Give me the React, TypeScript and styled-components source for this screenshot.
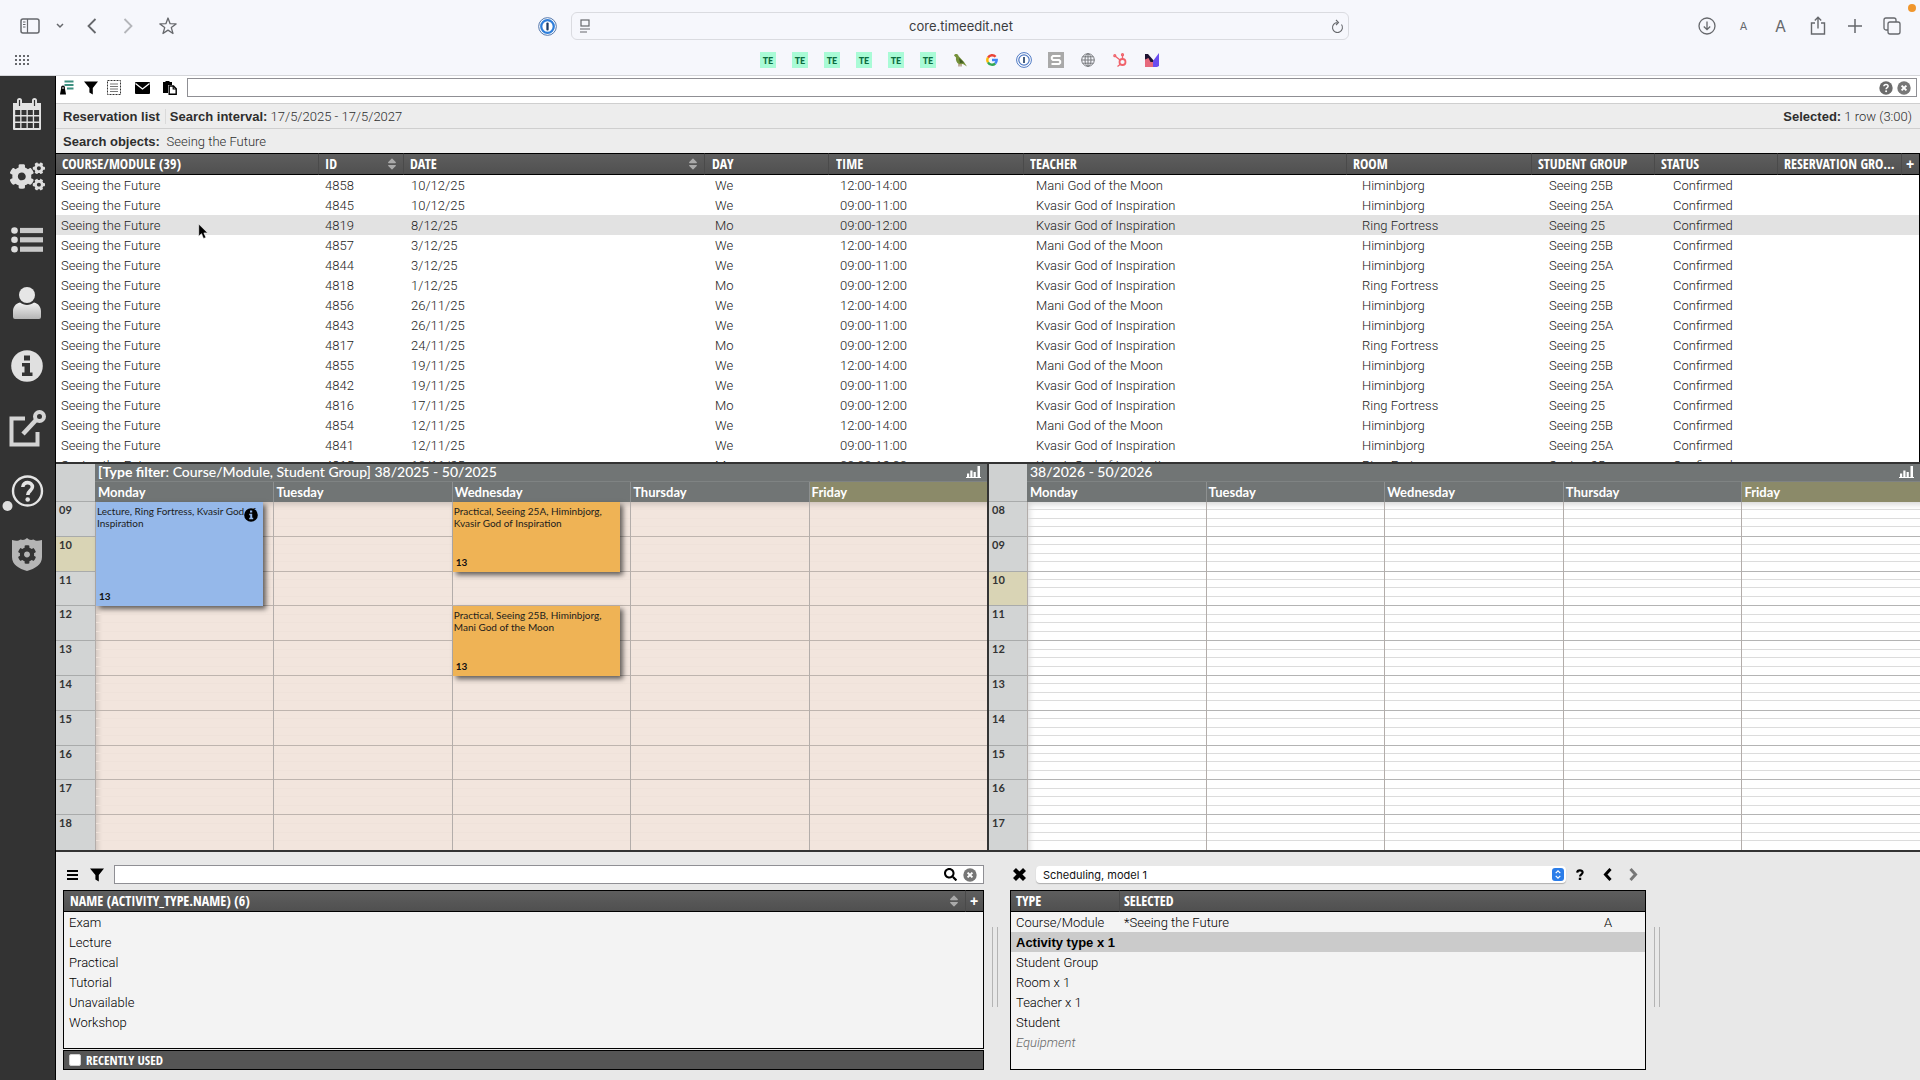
import React from "react";
import styled, { createGlobalStyle, css } from "styled-components";
import { FaCogs, FaSearch, FaSort, FaCog } from "react-icons/fa";

const HELV = `"Helvetica Neue", "Liberation Sans", Arial, sans-serif`;
const LIGHT = `Roboto, "Liberation Sans", sans-serif`;
const CONDENSED = `"Open Sans Condensed", "Liberation Sans Narrow", Roboto, sans-serif`;
const LATO = `Lato, "Open Sans", sans-serif`;

const Global = createGlobalStyle`
  *, *::before, *::after { box-sizing: border-box; }
  body { margin: 0; background: #e8e8e8; font-family: ${HELV}; font-size: 13px; color: #222; }
  button { border: 0; padding: 0; margin: 0; background: none; color: inherit; font: inherit; }
  svg { display: block; }
`;

/* ---------- page frame ---------- */

const Page = styled.div`
  display: flex;
  flex-direction: column;
  height: 100vh;
`;

const Frame = styled.div`
  display: flex;
  flex: 1;
  min-height: 0;
`;

const Main = styled.main`
  display: flex;
  flex-direction: column;
  flex: 1;
  min-width: 0;
  border-left: 1px solid #000;
`;

/* ---------- browser chrome ---------- */

const Chrome = styled.header`
  position: relative;
  background: #f6f7fc;
  border-bottom: 1px solid #d5d6da;
  color: #66686c;
`;

const ChromeRow = styled.div`
  display: grid;
  grid-template-columns: 1fr minmax(200px, 778px) 1fr;
  align-items: center;
  height: 52px;
`;

const ChromeGroup = styled.div<{ $end?: boolean }>`
  display: flex;
  align-items: center;
  justify-content: ${(p) => (p.$end ? "flex-end" : "flex-start")};
  padding: 0 10px 0 12px;
`;

const ChromeButton = styled.button<{ $w: number; $faint?: boolean; $push?: boolean; $size?: number }>`
  display: flex;
  align-items: center;
  justify-content: center;
  width: ${(p) => p.$w}px;
  height: 28px;
  margin-left: ${(p) => (p.$push ? "auto" : "0")};
  font-family: Inter, sans-serif;
  font-size: ${(p) => p.$size ?? 13}px;
  opacity: ${(p) => (p.$faint ? 0.45 : 1)};
`;

const Address = styled.div`
  display: flex;
  align-items: center;
  height: 28px;
  padding: 0 4px 0 6px;
  border: 1px solid #dadbe0;
  border-radius: 6px;
`;

const AddressInput = styled.input`
  flex: 1;
  min-width: 0;
  border: 0;
  background: none;
  text-align: center;
  font-family: Inter, sans-serif;
  font-size: 13px;
  color: #3c3d40;
`;

const RecordingDot = styled.span`
  position: absolute;
  top: 4px;
  right: 4px;
  width: 8px;
  height: 8px;
  border-radius: 50%;
  background: #f0962c;
`;

const Bookmarks = styled.nav`
  display: grid;
  grid-template-columns: 1fr auto 1fr;
  align-items: center;
  padding: 0 14px 7px;
`;

const GridButton = styled.button`
  justify-self: start;
  padding: 3px 1px;
`;

const BookmarkList = styled.div`
  display: flex;
  gap: 16px;
`;

const Bookmark = styled.a<{ $te?: boolean }>`
  display: flex;
  align-items: center;
  justify-content: center;
  width: 16px;
  height: 16px;
  text-decoration: none;
  ${(p) =>
    p.$te &&
    css`
      background: #a9fbd6;
      color: #0b6b3f;
      font: 900 9px Lato, sans-serif;
    `}
`;

/* ---------- left rail ---------- */

const Rail = styled.nav`
  display: flex;
  flex-direction: column;
  width: 55px;
  padding: 6px 1px 0 0;
  background: #333;
  color: #dedede;
`;

const RailButton = styled.button`
  display: flex;
  align-items: center;
  justify-content: center;
  height: 63px;
`;

/* ---------- reservation list ---------- */

const ToolRow = styled.div`
  display: flex;
  align-items: center;
  height: 27px;
  padding: 0 3px 4px 2px;
  background: #fff;
  color: #000;
`;

const ToolButton = styled.button<{ $w: number; $color?: string }>`
  display: flex;
  align-items: center;
  justify-content: center;
  flex: none;
  width: ${(p) => p.$w}px;
  height: 19px;
  color: ${(p) => p.$color ?? "#000"};
`;

const SearchBox = styled.div<{ $gap?: number }>`
  display: flex;
  align-items: center;
  flex: 1;
  min-width: 0;
  height: 19px;
  margin-left: ${(p) => p.$gap ?? 0}px;
  padding-right: 3px;
  background: #fff;
  border: 1px solid #8f8f94;
`;

const SearchInput = styled.input`
  flex: 1;
  min-width: 0;
  height: 100%;
  border: 0;
  padding: 0 4px;
  background: none;
  font: 13px ${HELV};
  outline: none;
`;

const InfoRow = styled.div`
  display: flex;
  align-items: center;
  height: 25px;
  padding: 0 8px 0 7px;
  background: #ededed;
  border-top: 1px solid #cfcfcf;
  color: #2e2e2e;
  white-space: pre;
`;

const InfoItem = styled.span<{ $bar?: boolean; $end?: boolean }>`
  font: 300 13px ${LIGHT};
  margin-left: ${(p) => (p.$end ? "auto" : "0")};
  ${(p) =>
    p.$bar &&
    css`
      margin-left: 5px;
      padding-left: 4px;
      border-left: 1px solid #dadada;
    `}
  strong {
    font: 700 13px ${HELV};
  }
`;

const ListPane = styled.section`
  flex: none;
  height: 309px;
  overflow: hidden;
  background: #fff;
  border-right: 1px solid #000;
`;

const Grid = styled.table`
  width: 100%;
  table-layout: fixed;
  border-collapse: separate;
  border-spacing: 0;
`;

const HeadCell = styled.th<{ $first?: boolean; $pad?: number }>`
  height: 22px;
  padding: 0 0 0 ${(p) => p.$pad ?? 6}px;
  background: linear-gradient(#5e5e5e, #505050);
  border-top: 1px solid #000;
  border-bottom: 1px solid #000;
  border-left: ${(p) => (p.$first ? "0" : "1px solid #4a4a4a")};
  color: #fff;
  font: 700 14px/20px ${CONDENSED};
  text-align: left;
  white-space: nowrap;
  overflow: hidden;
`;

const HeadLabel = styled.div`
  margin-right: 4px;
  overflow: hidden;
  text-overflow: ellipsis;
`;

const HeadFlex = styled.div`
  display: flex;
  align-items: center;
  justify-content: space-between;
  padding-right: 4px;
`;

const SortButton = styled.button`
  color: #aaa;
`;

const AddButton = styled.button`
  display: block;
  font-family: "Liberation Sans", sans-serif;
  font-size: 14px;
`;

const Row = styled.tr<{ $selected?: boolean }>`
  background: ${(p) => (p.$selected ? "#e2e2e2" : "transparent")};
`;

const Cell = styled.td<{ $pad: number }>`
  position: relative;
  height: 20px;
  padding: 2px 0 0 ${(p) => p.$pad}px;
  font: 300 13px/18px ${LIGHT};
  color: #222;
  white-space: nowrap;
`;

const Pointer = styled.svg`
  position: absolute;
  left: 142px;
  top: 8px;
`;

/* ---------- calendars ---------- */

const Calendars = styled.section`
  display: grid;
  grid-template-columns: 931fr 933fr;
  flex: 1;
  min-height: 0;
  border-top: 2px solid #333;
  border-bottom: 2px solid #333;
`;

const Calendar = styled.div<{ $divided?: boolean }>`
  display: grid;
  grid-template-columns: ${(p) => (p.$divided ? 38 : 39)}px minmax(0, 1fr);
  grid-template-rows: 38px minmax(0, 1fr);
  min-width: 0;
  border-left: ${(p) => (p.$divided ? "2px solid #333" : "0")};
  font-family: ${LATO};
`;

const Corner = styled.div`
  background: #cfd1d1;
  border-bottom: 1px solid #a9abab;
`;

const CalHead = styled.div`
  background: #717575;
  color: #fff;
`;

const CalTitle = styled.div`
  display: flex;
  align-items: center;
  justify-content: space-between;
  height: 18px;
  padding: 0 6px 2px 3px;
  border-bottom: 1px solid #7f8383;
  font-size: 14px;
  font-weight: 500;
  line-height: 15px;
  white-space: nowrap;
  b {
    font-weight: 700;
  }
`;

const Days = styled.div`
  display: grid;
  grid-template-columns: repeat(5, minmax(0, 1fr));
  height: 20px;
`;

const DayName = styled.div<{ $today?: boolean; $first?: boolean }>`
  padding-left: 2px;
  border-left: 1px solid ${(p) => (p.$first ? "transparent" : "#8d9090")};
  background: ${(p) => (p.$today ? "#8b8a69" : "transparent")};
  font-size: 13px;
  font-weight: 700;
  line-height: 20px;
`;

const Hours = styled.div`
  display: grid;
  grid-template-rows: repeat(10, minmax(0, 1fr));
  background: #d2d4d4;
`;

const Hour = styled.div<{ $now?: boolean }>`
  padding: 1px 0 0 3px;
  border-bottom: 1px solid #a9abab;
  background: ${(p) => (p.$now ? "#d9d4b5" : "transparent")};
  color: #333;
  font-size: 11px;
  font-weight: 700;
  line-height: 14px;
  &:last-child {
    border-bottom: 0;
  }
`;

const Board = styled.div<{ $tint?: boolean }>`
  display: grid;
  grid-template-columns: repeat(5, minmax(0, 1fr));
  background: ${(p) => (p.$tint ? "#f2e5dd" : "#fff")};
  box-shadow: inset 6px 6px 6px -4px rgba(0, 0, 0, 0.18);
`;

const DayColumn = styled.div`
  display: grid;
  grid-template-rows: repeat(10, minmax(0, 1fr));
  grid-template-columns: minmax(0, 1fr);
  border-left: 1px solid #b3adaa;
`;

const Slot = styled.div<{ $row: number; $tint?: boolean }>`
  grid-row: ${(p) => p.$row};
  grid-column: 1;
  display: grid;
  grid-template-rows: repeat(4, 1fr);
  border-bottom: 1px solid ${(p) => (p.$tint ? "#beb4ae" : "#b4b4b4")};
  ${(p) => p.$row === 10 && "border-bottom: 0;"}
`;

const Quarter = styled.div<{ $tint?: boolean }>`
  border-bottom: 1px solid ${(p) => (p.$tint ? "#efe2da" : "#dcdcdc")};
  &:last-child {
    border-bottom: 0;
  }
`;

const Event = styled.article<{ $from: number; $to: number; $color: string }>`
  grid-row: ${(p) => p.$from} / ${(p) => p.$to};
  grid-column: 1;
  position: relative;
  display: flex;
  flex-direction: column;
  justify-content: space-between;
  width: 94%;
  padding: 3px 0 3px 1px;
  background: ${(p) => p.$color};
  box-shadow: 3px 3px 5px rgba(0, 0, 0, 0.6);
  color: #1c1c1c;
  font-size: 10px;
  line-height: 12px;
`;

const EventCount = styled.strong`
  padding-left: 2px;
  font-size: 10px;
  line-height: 14px;
  color: #111;
`;

const EventInfo = styled.svg`
  position: absolute;
  right: 5px;
  top: 6px;
`;

/* ---------- bottom panels ---------- */

const Bottom = styled.section`
  display: grid;
  grid-template-columns: minmax(0, 921fr) 26px minmax(0, 636fr) 26px minmax(0, 248fr);
  flex: none;
  height: 228px;
  padding: 13px 0 10px 7px;
  background: #e8e8e8;
`;

const Panel = styled.div`
  display: flex;
  flex-direction: column;
  gap: 6px;
  min-width: 0;
`;

const PanelTools = styled.div`
  display: flex;
  align-items: center;
  height: 19px;
`;

const PanelStack = styled.div`
  display: flex;
  flex-direction: column;
  gap: 1px;
  flex: 1;
  min-height: 0;
`;

const PanelBox = styled.div`
  flex: 1;
  min-height: 0;
  overflow: hidden;
  background: #f3f3f3;
  border: 1px solid #000;
  border-top: 0;
`;

const PanelCell = styled.td<{ $bold?: boolean; $muted?: boolean }>`
  height: 20px;
  padding: 2px 0 0 5px;
  font: ${(p) => (p.$bold ? `700 13px/18px ${HELV}` : `300 13px/18px ${LIGHT}`)};
  font-style: ${(p) => (p.$muted ? "italic" : "normal")};
  color: ${(p) => (p.$muted ? "#666" : "#000")};
  white-space: nowrap;
`;

const PanelRow = styled.tr<{ $selected?: boolean }>`
  background: ${(p) => (p.$selected ? "#cbcbcb" : "transparent")};
`;

const RecentBar = styled.label`
  display: flex;
  align-items: center;
  gap: 5px;
  height: 20px;
  padding-left: 5px;
  background: #555;
  border: 1px solid #000;
  color: #fff;
  font: 700 13px ${CONDENSED};
`;

const RecentCheck = styled.input`
  appearance: none;
  width: 12px;
  height: 12px;
  margin: 0;
  border-radius: 2px;
  background: #fff;
  border: 1px solid #d0d0d0;
`;

const Splitter = styled.div`
  align-self: start;
  justify-self: start;
  width: 6px;
  height: 80px;
  margin: 62px 0 0 8px;
  border: solid #b4b4b4;
  border-width: 0 1px;
`;

const ModelPick = styled.div`
  display: grid;
  grid-template-columns: minmax(0, 1fr);
  align-items: center;
  flex: 1;
  margin-left: 8px;
  border-radius: 4px;
  background: #fff;
  box-shadow: 0 1px 1px rgba(0, 0, 0, 0.25);
  > * {
    grid-area: 1 / 1;
  }
  > svg {
    justify-self: end;
    margin-right: 2px;
    pointer-events: none;
  }
`;

const ModelSelect = styled.select`
  appearance: none;
  height: 17px;
  padding: 0 20px 0 7px;
  border: 0;
  background: none;
  color: #111;
  font: 11px Inter, sans-serif;
`;

/* ---------- drawings ---------- */

const OnePassword = ({ s }: { s: number }) => (
  <svg width={s} height={s} viewBox="0 0 20 20">
    <circle cx="10" cy="10" r="9.3" fill="#fff" stroke="#4a70a8" strokeWidth="1" />
    <circle cx="10" cy="10" r="6.6" fill="#fff" stroke="#2f7fdb" strokeWidth="2.4" />
    <rect x="8.8" y="5.8" width="2.4" height="8.4" rx="1" fill="#1c3a63" />
  </svg>
);

const OnePasswordOutline = () => (
  <svg width="16" height="16" viewBox="0 0 16 16" fill="#fff" stroke="#4d78c4">
    <circle cx="8" cy="8" r="7.4" strokeWidth="1" />
    <circle cx="8" cy="8" r="5.2" strokeWidth="1.2" />
    <rect x="7.2" y="5" width="1.6" height="6" fill="#1c3a63" stroke="none" />
  </svg>
);

const CloseCircle = () => (
  <svg width="14" height="14" viewBox="0 0 14 14">
    <circle cx="7" cy="7" r="6.7" fill="#777" />
    <path d="M4.6 4.6l4.8 4.8M9.4 4.6l-4.8 4.8" stroke="#fff" strokeWidth="2" />
  </svg>
);

const HelpCircle = () => (
  <svg width="14" height="14" viewBox="0 0 14 14">
    <circle cx="7" cy="7" r="6.7" fill="#6b6b6b" />
    <path d="M4.9 5.3c.1-2.6 4.3-2.5 4.2 0C9.1 6.7 7.1 6.6 7.1 8.3" fill="none" stroke="#fff" strokeWidth="1.5" />
    <circle cx="7.1" cy="10.3" r="1" fill="#fff" />
  </svg>
);

const ChartBars = () => (
  <svg width="15" height="12" viewBox="0 0 15 12" fill="#fff">
    <path d="M1 7.5h2.200V11H1zM4.300 4.500h2.200V11H4.300zM7.600 6h2.200v5H7.600zM11.500 0h2.500v11h-2.500zM0 11h15v1H0z" />
  </svg>
);

const Funnel = () => (
  <svg width="14" height="14" viewBox="0 0 14 14">
    <path d="M0 .5h14L8.800 7v6.500L5.400 11.500V7z" />
  </svg>
);

const railIcons: { label: string; icon: React.ReactNode }[] = [
  {
    label: "Calendar",
    icon: (
      <svg width="30" height="32" viewBox="0 0 30 32">
        <path fill="#e2e2e2" d="M1 5h4V2.500a2.500 2.500 0 0 1 5 0V5h10V2.500a2.500 2.500 0 0 1 5 0V5h4v26a1 1 0 0 1-1 1H2a1 1 0 0 1-1-1z" />
        <path stroke="#333" strokeWidth="1.200" d="M7.500 2v6M22.500 2v6" />
        <g fill="#333">
          {[12, 18.5, 25].map((y) =>
            [3.2, 9.5, 15.8, 22.1].map((x) => <rect key={`${x}-${y}`} x={x} y={y} width="5" height="5" />)
          )}
        </g>
      </svg>
    ),
  },
  { label: "Settings", icon: <FaCogs size={35} /> },
  {
    label: "Lists",
    icon: (
      <svg width="32" height="26" viewBox="0 0 32 26" fill="#dedede">
        {[3.5, 12.8, 22.2].map((y) => (
          <g key={y}>
            <circle cx="3.5" cy={y} r="3.3" />
            <rect x="9" y={y - 2.6} width="23" height="5.2" fill="#c9c9c9" />
          </g>
        ))}
      </svg>
    ),
  },
  {
    label: "User",
    icon: (
      <svg width="30" height="32" viewBox="0 0 30 32">
        <defs>
          <linearGradient id="body" x1="0" y1="0" x2="0" y2="1">
            <stop offset="0" stopColor="#f2f2f2" />
            <stop offset="1" stopColor="#b4b4b4" />
          </linearGradient>
        </defs>
        <circle cx="15" cy="8" r="8" fill="#e6e6e6" />
        <path fill="url(#body)" d="M8 15.500c4 3.300 10 3.300 14 0 4.500 1 7 4.500 7 9V30a2 2 0 0 1-2 2H3a2 2 0 0 1-2-2v-5.500c0-4.500 2.500-8 7-9z" />
      </svg>
    ),
  },
  {
    label: "Information",
    icon: (
      <svg width="32" height="32" viewBox="0 0 32 32">
        <circle cx="16" cy="16" r="15.800" fill="#e0e0e0" />
        <path fill="#333" d="M13 5.500h6v5h-6zM11 13h8v9.500h2.500V26H11v-3.500h2.500v-6H11z" />
      </svg>
    ),
  },
  {
    label: "Open external",
    icon: (
      <svg width="38" height="38" viewBox="0 0 38 38" fill="none" stroke="#d4d4d4">
        <path strokeWidth="4" d="M17 8.500H3.500v26h26V22" />
        <path strokeWidth="4.500" d="M15 24L29 9" />
        <circle cx="31.500" cy="6.500" r="4.500" strokeWidth="4" />
      </svg>
    ),
  },
  {
    label: "Help",
    icon: (
      <svg width="50" height="38" viewBox="0 0 50 38">
        <circle cx="25.500" cy="18" r="14.500" fill="none" stroke="#e4e4e4" strokeWidth="2.400" />
        <path d="M20.800 14c.2-6 9.800-5.600 9.600 0-.1 3.500-4.600 3.800-4.600 8" fill="none" stroke="#e4e4e4" strokeWidth="3.600" />
        <circle cx="25.700" cy="26.500" r="2.300" fill="#e4e4e4" />
        <circle cx="5.500" cy="33" r="5" fill="#dedede" />
      </svg>
    ),
  },
  {
    label: "Administration",
    icon: (
      <svg width="30" height="33" viewBox="0 0 30 33">
        <path fill="#b5b5b5" d="M15 0c2 2 4 2.500 6.500 1.500C23.500 3 26 3.300 30 2v17c0 8-7 11.500-15 14C7 30.500 0 27 0 19V2c4 1.300 6.500 1 8.500-.5C11 2.500 13 2 15 0z" />
        <g color="#333">
          <FaCog x="5.5" y="7" size={19} />
        </g>
      </svg>
    ),
  },
];

/* ---------- data ---------- */

const columns = [
  { title: "COURSE/MODULE (39)", width: 262, pad: 5, headPad: 6 },
  { title: "ID", width: 85, pad: 7, sort: true },
  { title: "DATE", width: 301, pad: 8, sort: true },
  { title: "DAY", width: 124, pad: 11, headPad: 7 },
  { title: "TIME", width: 195, pad: 12, headPad: 7 },
  { title: "TEACHER", width: 0, pad: 13 },
  { title: "ROOM", width: 185, pad: 16 },
  { title: "STUDENT GROUP", width: 123, pad: 18 },
  { title: "STATUS", width: 123, pad: 19 },
  { title: "RESERVATION GROUP", width: 124, pad: 19 },
];

const kvasir = "Kvasir God of Inspiration";
const mani = "Mani God of the Moon";
const noon = (id: string, date: string) => [id, date, "We", "12:00-14:00", mani, "Himinbjorg", "Seeing 25B"];
const morning = (id: string, date: string) => [id, date, "We", "09:00-11:00", kvasir, "Himinbjorg", "Seeing 25A"];
const lecture = (id: string, date: string) => [id, date, "Mo", "09:00-12:00", kvasir, "Ring Fortress", "Seeing 25"];

const reservations = [
  noon("4858", "10/12/25"),
  morning("4845", "10/12/25"),
  lecture("4819", "8/12/25"),
  noon("4857", "3/12/25"),
  morning("4844", "3/12/25"),
  lecture("4818", "1/12/25"),
  noon("4856", "26/11/25"),
  morning("4843", "26/11/25"),
  lecture("4817", "24/11/25"),
  noon("4855", "19/11/25"),
  morning("4842", "19/11/25"),
  lecture("4816", "17/11/25"),
  noon("4854", "12/11/25"),
  morning("4841", "12/11/25"),
  lecture("4815", "10/11/25"),
];

const days = ["Monday", "Tuesday", "Wednesday", "Thursday", "Friday"];

type CalEvent = { day: number; from: number; to: number; color: string; text: string; info?: boolean };

const events: CalEvent[] = [
  { day: 0, from: 1, to: 4, color: "#95b8ea", text: "Lecture, Ring Fortress, Kvasir God of Inspiration", info: true },
  { day: 2, from: 1, to: 3, color: "#efb355", text: "Practical, Seeing 25A, Himinbjorg, Kvasir God of Inspiration" },
  { day: 2, from: 4, to: 6, color: "#efb355", text: "Practical, Seeing 25B, Himinbjorg, Mani God of the Moon" },
];

const activityTypes = ["Exam", "Lecture", "Practical", "Tutorial", "Unavailable", "Workshop"];

const selection = [
  { type: "Course/Module", value: "*Seeing the Future", mark: "A" },
  { type: "Activity type x 1", bold: true },
  { type: "Student Group" },
  { type: "Room x 1" },
  { type: "Teacher x 1" },
  { type: "Student" },
  { type: "Equipment", muted: true },
];

/* ---------- sections ---------- */

function Browser() {
  const line = { fill: "none", stroke: "currentColor", strokeWidth: 1.5 } as const;
  return (
    <Chrome>
      <RecordingDot />
      <ChromeRow>
        <ChromeGroup>
          <ChromeButton $w={36} aria-label="Sidebar">
            <svg width="20" height="16" viewBox="0 0 20 16" {...line}>
              <rect x="1" y="1" width="18" height="14" rx="2" />
              <path d="M7.500 1v14M3 4h2.500M3 6.500h2.500M3 9h2.500" strokeWidth="1.200" />
            </svg>
          </ChromeButton>
          <ChromeButton $w={24} aria-label="Tab groups">
            <svg width="8" height="6" viewBox="0 0 8 6" {...line}><path d="M1 1l3 3 3-3" /></svg>
          </ChromeButton>
          <ChromeButton $w={40} aria-label="Back">
            <svg width="10" height="16" viewBox="0 0 10 16" {...line} strokeWidth={1.8}><path d="M8.500 1L1.500 8l7 7" /></svg>
          </ChromeButton>
          <ChromeButton $w={32} $faint aria-label="Forward">
            <svg width="10" height="16" viewBox="0 0 10 16" {...line} strokeWidth={1.8}><path d="M1.500 1l7 7-7 7" /></svg>
          </ChromeButton>
          <ChromeButton $w={48} aria-label="Favourite">
            <svg width="18" height="18" viewBox="0 0 18 18" {...line} strokeWidth={1.3}>
              <path d="M9 1l2.100 5.700 6 .2-4.800 3.700 1.700 5.900L9 13.100l-5 3.400 1.700-5.900L.9 6.900l6-.2z" strokeLinejoin="round" />
            </svg>
          </ChromeButton>
          <ChromeButton $w={28} $push aria-label="1Password"><OnePassword s={19} /></ChromeButton>
        </ChromeGroup>
        <Address>
          <ChromeButton $w={14} aria-label="Reader">
            <svg width="12" height="14" viewBox="0 0 12 14" {...line} strokeWidth={1.2}>
              <rect x="2" y="1" width="8" height="6" /><path d="M1 10h10M1 13h7" />
            </svg>
          </ChromeButton>
          <AddressInput aria-label="Address" defaultValue="core.timeedit.net" />
          <ChromeButton $w={14} aria-label="Reload">
            <svg width="13" height="15" viewBox="0 0 13 15" {...line} strokeWidth={1.1}>
              <path d="M10.500 5.500a5 5 0 1 1-4-2M5 1l2.500 2.500L5 6" />
            </svg>
          </ChromeButton>
        </Address>
        <ChromeGroup $end>
          <ChromeButton $w={37} aria-label="Downloads">
            <svg width="18" height="18" viewBox="0 0 18 18" {...line} strokeWidth={1.3}>
              <circle cx="9" cy="9" r="8" /><path d="M9 4.500v8M5.800 9.500L9 12.700l3.200-3.200" />
            </svg>
          </ChromeButton>
          <ChromeButton $w={37} $size={11}>A</ChromeButton>
          <ChromeButton $w={37} $size={16}>A</ChromeButton>
          <ChromeButton $w={37} aria-label="Share">
            <svg width="16" height="20" viewBox="0 0 16 20" {...line} strokeWidth={1.4}>
              <path d="M5 7H1.500v11h13V7H11M8 12.500V1.500M4.800 4.500L8 1.300l3.200 3.200" />
            </svg>
          </ChromeButton>
          <ChromeButton $w={37} aria-label="New tab">
            <svg width="14" height="14" viewBox="0 0 14 14" {...line}><path d="M7 0v14M0 7h14" /></svg>
          </ChromeButton>
          <ChromeButton $w={37} aria-label="Tabs">
            <svg width="18" height="18" viewBox="0 0 18 18" {...line} strokeWidth={1.3}>
              <rect x="5" y="5" width="12" height="12" rx="2" /><path d="M5 13H3a2 2 0 0 1-2-2V3a2 2 0 0 1 2-2h8a2 2 0 0 1 2 2v2" />
            </svg>
          </ChromeButton>
        </ChromeGroup>
      </ChromeRow>
      <Bookmarks>
        <GridButton aria-label="All bookmarks">
          <svg width="14" height="10" viewBox="0 0 14 10" fill="#66686c">
            {[0, 4, 8].map((y) => [0, 4, 8, 12].map((x) => <rect key={`${x}-${y}`} x={x} y={y} width="2" height="2" />))}
          </svg>
        </GridButton>
        <BookmarkList>
          {[1, 2, 3, 4, 5, 6].map((n) => <Bookmark key={n} href="#" $te>TE</Bookmark>)}
          <Bookmark href="#" aria-label="Parrot">
            <svg width="14" height="14" viewBox="0 0 14 14">
              <path d="M1 2.500C2 .5 5 .5 5.500 3L11 9l3 4.500-4-2.500-4 .2C3.500 10 2.500 7 3 4.500z" fill="#75913a" />
              <path d="M6 5l5 4.500-4 .5z" fill="#3f5a22" /><path d="M6 11v2.500M8 11v2.500" stroke="#8a6b42" />
            </svg>
          </Bookmark>
          <Bookmark href="#" aria-label="Google">
            <svg width="12" height="12" viewBox="0 0 12 12" fill="none" strokeWidth="2.400">
              <path d="M9.600 2.800A4.700 4.700 0 0 0 2 3.600" stroke="#ea4335" />
              <path d="M2 3.600a4.700 4.700 0 0 0 0 4.800" stroke="#fbbc05" />
              <path d="M2 8.400a4.700 4.700 0 0 0 7.200 1.100" stroke="#34a853" />
              <path d="M9.200 9.500A4.700 4.700 0 0 0 10.700 6H6" stroke="#4285f4" />
            </svg>
          </Bookmark>
          <Bookmark href="#" aria-label="1Password"><OnePasswordOutline /></Bookmark>
          <Bookmark href="#" aria-label="S">
            <svg width="16" height="16" viewBox="0 0 16 16">
              <rect width="16" height="16" fill="#a9a9a9" />
              <path d="M12.500 4H5L3.800 5.200v1.600L5 8h6l1.200 1.200v1.600L11 12H3.500" fill="none" stroke="#fff" strokeWidth="2" />
            </svg>
          </Bookmark>
          <Bookmark href="#" aria-label="Web">
            <svg width="14" height="14" viewBox="0 0 14 14" fill="none" stroke="#77797d" strokeWidth="1">
              <circle cx="7" cy="7" r="6.300" /><ellipse cx="7" cy="7" rx="3" ry="6.300" /><path d="M7 .7v12.600M.7 7h12.600M1.600 3.800h10.800M1.600 10.200h10.800" />
            </svg>
          </Bookmark>
          <Bookmark href="#" aria-label="HubSpot">
            <svg width="14" height="15" viewBox="0 0 14 15" fill="none" stroke="#f0626a" strokeWidth="1.800">
              <circle cx="9.500" cy="9" r="3" /><path d="M9.500 6V2M7.300 7.200L2 3M7.300 11.200L4.500 13.500" strokeWidth="1.300" />
              <circle cx="9.500" cy="1.700" r=".7" /><circle cx="1.800" cy="2.700" r=".7" />
            </svg>
          </Bookmark>
          <Bookmark href="#" aria-label="N">
            <svg width="14" height="14" viewBox="0 0 14 14">
              <path d="M0 6l8 2v6H0z" fill="#e6697c" /><path d="M0 1h3l6 7v1H0z" fill="#1d1433" /><path d="M0 6.500l3.500-1.500L8 14H0z" fill="#e6697c" />
              <path d="M14 0v13l-2 1H8V8z" fill="#6a4df0" />
            </svg>
          </Bookmark>
        </BookmarkList>
      </Bookmarks>
    </Chrome>
  );
}

function ReservationTools() {
  return (
    <ToolRow>
      <ToolButton $w={17} aria-label="Locked list">
        <svg width="14" height="15" viewBox="0 0 14 15">
          <path d="M4.500 1.500h9M4.500 5h9M7 8.500h6.500" stroke="#3d9080" strokeWidth="2" />
          <path d="M0 14.500l1-5.500h4l1 5.500z" /><path d="M1.800 9.500V7.300a1.200 1.200 0 0 1 2.400 0v2.200" fill="none" stroke="#000" strokeWidth="1.400" />
        </svg>
      </ToolButton>
      <ToolButton $w={32} aria-label="Filter"><Funnel /></ToolButton>
      <ToolButton $w={14} aria-label="Select all">
        <svg width="14" height="15" viewBox="0 0 14 15" fill="none" stroke="#333">
          <rect x=".5" y=".5" width="13" height="14" strokeDasharray="2 1" />
          <path d="M3 4h8M3 6.500h8M3 9h8M3 11.500h8" stroke="#777" />
        </svg>
      </ToolButton>
      <ToolButton $w={42} aria-label="Mail">
        <svg width="15" height="12" viewBox="0 0 15 12">
          <rect width="15" height="12" rx="1" /><path d="M.5 1.500l7 5.500 7-5.500" fill="none" stroke="#fff" strokeWidth="1.300" />
        </svg>
      </ToolButton>
      <ToolButton $w={14} aria-label="Paste">
        <svg width="14" height="14" viewBox="0 0 14 14">
          <path d="M0 1h2.500V0h4v1H9v3H5v8H0z" />
          <path d="M6.200 5h4.300l2.700 2.800v5.500h-7z" fill="#fff" stroke="#000" strokeWidth="1.400" />
          <path d="M10.200 5v3h3" fill="none" stroke="#000" strokeWidth="1.200" />
        </svg>
      </ToolButton>
      <SearchBox $gap={10}>
        <SearchInput aria-label="Search reservations" />
        <ToolButton $w={18} aria-label="Help"><HelpCircle /></ToolButton>
        <ToolButton $w={18} aria-label="Clear"><CloseCircle /></ToolButton>
      </SearchBox>
    </ToolRow>
  );
}

function ReservationList() {
  return (
    <ListPane>
      <Grid>
        <colgroup>
          {columns.map((c) => <col key={c.title} style={c.width ? { width: c.width } : undefined} />)}
          <col style={{ width: 18 }} />
        </colgroup>
        <thead>
          <tr>
            {columns.map((c, i) => (
              <HeadCell key={c.title} $first={i === 0} $pad={c.headPad}>
                {c.sort ? (
                  <HeadFlex>{c.title}<SortButton aria-label={`Sort by ${c.title}`}><FaSort size={14} /></SortButton></HeadFlex>
                ) : <HeadLabel>{c.title}</HeadLabel>}
              </HeadCell>
            ))}
            <HeadCell $pad={4}><AddButton aria-label="Add column">+</AddButton></HeadCell>
          </tr>
        </thead>
        <tbody>
          {reservations.map((r, i) => (
            <Row key={r[0]} $selected={i === 2}>
              <Cell $pad={5}>
                Seeing the Future
                {i === 2 && (
                  <Pointer width="11" height="17" viewBox="0 0 11 17">
                    <path d="M.7 1v12.200l2.800-2.500 2 4.800 2.400-1-2-4.600h3.800z" fill="#000" stroke="#fff" strokeWidth=".6" />
                  </Pointer>
                )}
              </Cell>
              {r.map((v, j) => <Cell key={j} $pad={columns[j + 1].pad}>{v}</Cell>)}
              <Cell $pad={19}>Confirmed</Cell>
              <Cell $pad={0} colSpan={2} />
            </Row>
          ))}
        </tbody>
      </Grid>
    </ListPane>
  );
}

type WeekProps = { title: React.ReactNode; start: number; now: number; tint?: boolean; items?: CalEvent[]; divided?: boolean };

function Week({ title, start, now, tint, items = [], divided }: WeekProps) {
  const rows = Array.from({ length: 10 }, (_, i) => i);
  return (
    <Calendar $divided={divided}>
      <Corner />
      <CalHead>
        <CalTitle><span>{title}</span><button aria-label="Statistics"><ChartBars /></button></CalTitle>
        <Days>
          {days.map((d, i) => <DayName key={d} $first={i === 0} $today={i === 4}>{d}</DayName>)}
        </Days>
      </CalHead>
      <Hours>
        {rows.map((i) => <Hour key={i} $now={start + i === now}>{String(start + i).padStart(2, "0")}</Hour>)}
      </Hours>
      <Board $tint={tint}>
        {days.map((d, di) => (
          <DayColumn key={d}>
            {rows.map((i) => (
              <Slot key={i} $row={i + 1} $tint={tint}>
                {[0, 1, 2, 3].map((q) => <Quarter key={q} $tint={tint} />)}
              </Slot>
            ))}
            {items.filter((e) => e.day === di).map((e) => (
              <Event key={e.from} $from={e.from} $to={e.to} $color={e.color}>
                <span>{e.text}</span>
                <EventCount>13</EventCount>
                {e.info && (
                  <EventInfo width="14" height="14" viewBox="0 0 14 14">
                    <circle cx="7" cy="7" r="6.800" />
                    <path d="M6 2.500h2.200v2H6zM5.200 5.700h3v4h1v1.500h-4V9.700h1V7.200h-1z" fill="#95b8ea" />
                  </EventInfo>
                )}
              </Event>
            ))}
          </DayColumn>
        ))}
      </Board>
    </Calendar>
  );
}

function ActivityPanel() {
  return (
    <Panel>
      <PanelTools>
        <ToolButton $w={18} aria-label="Menu">
          <svg width="11" height="10" viewBox="0 0 11 10"><path d="M0 1h11M0 5h11M0 9h11" stroke="#000" strokeWidth="2" /></svg>
        </ToolButton>
        <ToolButton $w={31} aria-label="Filter"><Funnel /></ToolButton>
        <SearchBox $gap={2}>
          <SearchInput aria-label="Search activity types" />
          <ToolButton $w={20} aria-label="Search"><FaSearch size={13} /></ToolButton>
          <ToolButton $w={20} aria-label="Clear"><CloseCircle /></ToolButton>
        </SearchBox>
      </PanelTools>
      <PanelStack>
        <PanelBox>
          <Grid>
            <colgroup><col /><col style={{ width: 18 }} /></colgroup>
            <thead>
              <tr>
                <HeadCell $first><HeadFlex>NAME (ACTIVITY_TYPE.NAME) (6)<SortButton aria-label="Sort by name"><FaSort size={14} /></SortButton></HeadFlex></HeadCell>
                <HeadCell $pad={4}><AddButton aria-label="Add column">+</AddButton></HeadCell>
              </tr>
            </thead>
            <tbody>
              {activityTypes.map((a) => <PanelRow key={a}><PanelCell colSpan={2}>{a}</PanelCell></PanelRow>)}
            </tbody>
          </Grid>
        </PanelBox>
        <RecentBar><RecentCheck type="checkbox" />RECENTLY USED</RecentBar>
      </PanelStack>
    </Panel>
  );
}

function SelectionPanel() {
  return (
    <Panel>
      <PanelTools>
        <ToolButton $w={18} aria-label="Remove">
          <svg width="13" height="13" viewBox="0 0 13 13"><path d="M1.500 1.500l10 10M11.500 1.500l-10 10" stroke="#000" strokeWidth="4.200" /></svg>
        </ToolButton>
        <ModelPick>
          <ModelSelect aria-label="Model" defaultValue="1"><option value="1">Scheduling, model 1</option></ModelSelect>
          <svg width="12" height="13" viewBox="0 0 12 13">
            <rect width="12" height="13" rx="3" fill="#2b7de9" />
            <path d="M3.700 5.200L6 2.900l2.300 2.300M3.700 7.800L6 10.100l2.300-2.300" fill="none" stroke="#fff" strokeWidth="1.200" />
          </svg>
        </ModelPick>
        <ToolButton $w={28} aria-label="Help">
          <svg width="8" height="11" viewBox="0 0 8 11">
            <path d="M1.200 3.600C1.300.6 6.700.6 6.600 3.500 6.500 5.300 4 5.300 4 7.500" fill="none" stroke="#000" strokeWidth="2.200" /><rect x="2.800" y="8.700" width="2.400" height="2.300" />
          </svg>
        </ToolButton>
        <ToolButton $w={26} aria-label="Previous">
          <svg width="9" height="13" viewBox="0 0 9 13" fill="none" stroke="currentColor" strokeWidth="3"><path d="M7.500 1L2.500 6.500l5 5.500" /></svg>
        </ToolButton>
        <ToolButton $w={26} $color="#777" aria-label="Next">
          <svg width="9" height="13" viewBox="0 0 9 13" fill="none" stroke="currentColor" strokeWidth="3"><path d="M1.500 1l5 5.500-5 5.500" /></svg>
        </ToolButton>
      </PanelTools>
      <PanelBox>
        <Grid>
          <colgroup><col style={{ width: 108 }} /><col /><col style={{ width: 46 }} /></colgroup>
          <thead>
            <tr><HeadCell $first $pad={5}>TYPE</HeadCell><HeadCell $pad={4} colSpan={2}>SELECTED</HeadCell></tr>
          </thead>
          <tbody>
            {selection.map((s) => (
              <PanelRow key={s.type} $selected={s.bold}>
                <PanelCell $bold={s.bold} $muted={s.muted}>{s.type}</PanelCell>
                <PanelCell>{s.value}</PanelCell>
                <PanelCell>{s.mark}</PanelCell>
              </PanelRow>
            ))}
          </tbody>
        </Grid>
      </PanelBox>
    </Panel>
  );
}

export default function App() {
  return (
    <Page>
      <Global />
      <Browser />
      <Frame>
        <Rail>
          {railIcons.map((r) => <RailButton key={r.label} aria-label={r.label}>{r.icon}</RailButton>)}
        </Rail>
        <Main>
          <ReservationTools />
          <InfoRow>
            <InfoItem><strong>Reservation list</strong></InfoItem>
            <InfoItem $bar><strong>Search interval:</strong> 17/5/2025 - 17/5/2027</InfoItem>
            <InfoItem $end><strong>Selected:</strong> 1 row (3:00)</InfoItem>
          </InfoRow>
          <InfoRow>
            <InfoItem><strong>Search objects: </strong> Seeing the Future</InfoItem>
          </InfoRow>
          <ReservationList />
          <Calendars>
            <Week
              title={<><b>[Type filter</b>: Course/Module, Student Group] 38/2025 - 50/2025</>}
              start={9} now={10} tint items={events}
            />
            <Week title="38/2026 - 50/2026" start={8} now={10} divided />
          </Calendars>
          <Bottom>
            <ActivityPanel />
            <Splitter />
            <SelectionPanel />
            <Splitter />
          </Bottom>
        </Main>
      </Frame>
    </Page>
  );
}
